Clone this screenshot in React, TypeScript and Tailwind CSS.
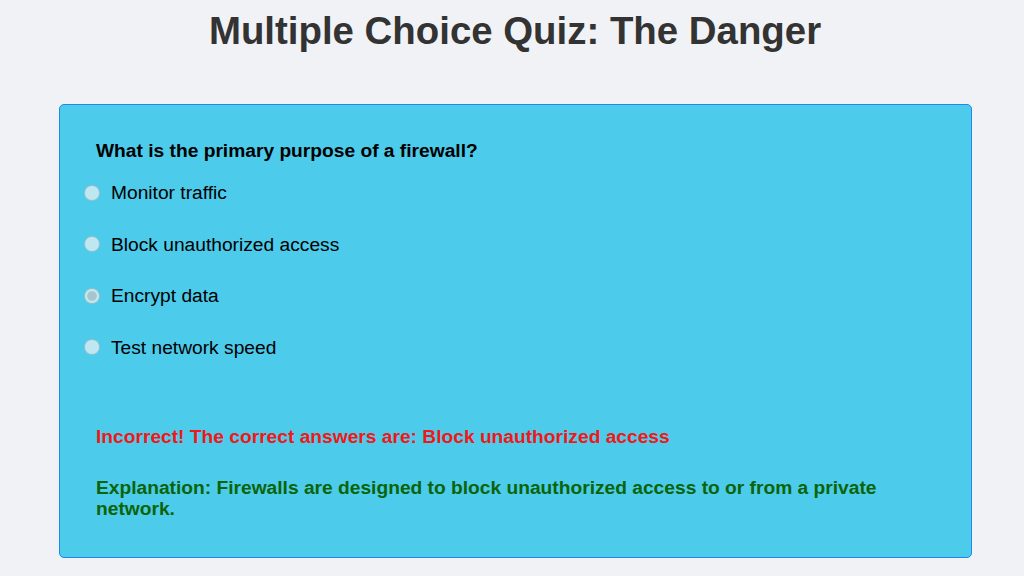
const OPTIONS = [
  'Monitor traffic',
  'Block unauthorized access',
  'Encrypt data',
  'Test network speed',
]

export default function App() {
  const picked = 'Encrypt data'

  return (
    <div className="min-h-[576px] bg-[#f0f2f5] font-['Liberation_Sans',Arial,sans-serif] text-black">
      <h1 className="pt-[9px] pl-[6px] text-center text-[38.4px] font-bold leading-[44px] text-[#333]">
        Multiple Choice Quiz: The Danger
      </h1>

      <div className="ml-[59px] mt-[51px] w-[913px] h-[454px] rounded-[5px] border border-[#1e88f0] bg-[#4ccbeb] px-[36px] pt-[34px]">
        <p className="text-[19.2px] font-bold leading-[23px]">What is the primary purpose of a firewall?</p>

        <div className="mt-[19px] flex flex-col gap-[28.6px]">
          {OPTIONS.map(opt => (
            <label key={opt} className="-ml-[12px] flex items-center gap-[11px] text-[19.2px] leading-[23px]">
              <input
                type="radio"
                name="q"
                disabled
                defaultChecked={opt === picked}
                className="m-0 h-[16px] w-[16px]"
              />
              <span>{opt}</span>
            </label>
          ))}
        </div>

        <p className="mt-[66px] text-[19.2px] font-bold leading-[23px] text-[#f01818]">
          Incorrect! The correct answers are: Block unauthorized access
        </p>

        <p className="mt-[29px] text-[19.2px] font-bold leading-[21px] text-[#0a640a]">
          Explanation: Firewalls are designed to block unauthorized access to or from a private network.
        </p>
      </div>
    </div>
  )
}
